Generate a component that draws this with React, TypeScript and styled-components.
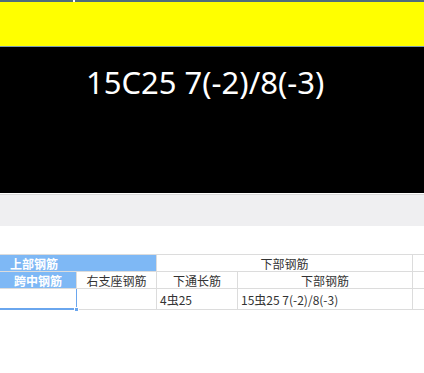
import React from "react";
import styled, { createGlobalStyle } from "styled-components";

const Global = createGlobalStyle`
  html, body { margin: 0; padding: 0; background: #ffffff; }
  body { font-family: "Noto Sans CJK SC", "Noto Sans", sans-serif; }
`;

const Page = styled.div`
  display: flex;
  flex-direction: column;
  width: 424px;
  height: 373px;
  overflow: hidden;
  background: #fff;
`;

const TopStrip = styled.div`
  height: 2px;
  background: #4f6d7c;
  position: relative;
`;

const Notch = styled.span`
  position: absolute;
  left: 73px;
  top: 0;
  width: 2px;
  height: 2px;
  background: #ffffff;
`;

const YellowBar = styled.div`
  height: 44px;
  background: #ffff00;
  border-bottom: 1px solid #7d9fae;
`;

const Display = styled.div`
  height: 147px;
  background: #000;
  color: #fff;
  font-family: "Noto Sans", sans-serif;
  font-size: 31px;
  line-height: 40px;
  padding: 15px 0 0 86px;
  box-sizing: border-box;
  border-bottom: 1px solid #ffffff;
`;

const GrayBand = styled.div`
  height: 31px;
  background: #efeff1;
  border-top: 1px solid #d9d9d9;
`;

const Spacer = styled.div`
  height: 28px;
`;

const Grid = styled.div`
  display: grid;
  width: 440px;
  grid-template-columns: 77px 80px 81px 175px 27px;
  grid-template-rows: 17px 17px 21px;
  border-top: 1px solid #dcdcdc;
  font-size: 12px;
  color: #333;
`;

const Cell = styled.div<{ $span?: number; $head?: boolean; $align?: "left" | "center"; $pad?: number; $sel?: boolean }>`
  grid-column: span ${(p) => p.$span ?? 1};
  display: flex;
  align-items: center;
  justify-content: ${(p) => (p.$align === "left" ? "flex-start" : "center")};
  padding-left: ${(p) => p.$pad ?? 0}px;
  box-sizing: border-box;
  white-space: nowrap;
  overflow: visible;
  background: ${(p) => (p.$head ? "#7eb8f5" : "#fff")};
  color: ${(p) => (p.$head ? "#fff" : "#333")};
  font-weight: ${(p) => (p.$head ? 700 : 400)};
  border-right: 1px solid ${(p) => (p.$sel ? "#6aa6ee" : "#dcdcdc")};
  border-bottom: ${(p) => (p.$sel ? "2px solid #6aa6ee" : "1px solid #dcdcdc")};
  position: relative;
`;

const Handle = styled.span`
  position: absolute;
  right: -3px;
  bottom: -4px;
  width: 5px;
  height: 5px;
  background: #6aa6ee;
  border: 1px solid #fff;
  box-sizing: border-box;
  z-index: 2;
`;

export default function App() {
  return (
    <Page>
      <Global />
      <TopStrip>
        <Notch />
      </TopStrip>
      <YellowBar />
      <Display>15C25 7(-2)/8(-3)</Display>
      <GrayBand />
      <Spacer />
      <Grid>
        <Cell $span={2} $head $align="left" $pad={10}>上部钢筋</Cell>
        <Cell $span={2}>下部钢筋</Cell>
        <Cell />
        <Cell $head>跨中钢筋</Cell>
        <Cell>右支座钢筋</Cell>
        <Cell>下通长筋</Cell>
        <Cell>下部钢筋</Cell>
        <Cell />
        <Cell $sel>
          <Handle />
        </Cell>
        <Cell />
        <Cell $align="left" $pad={3}>4虫25</Cell>
        <Cell $align="left" $pad={3}>15虫25 7(-2)/8(-3)</Cell>
        <Cell />
      </Grid>
    </Page>
  );
}
